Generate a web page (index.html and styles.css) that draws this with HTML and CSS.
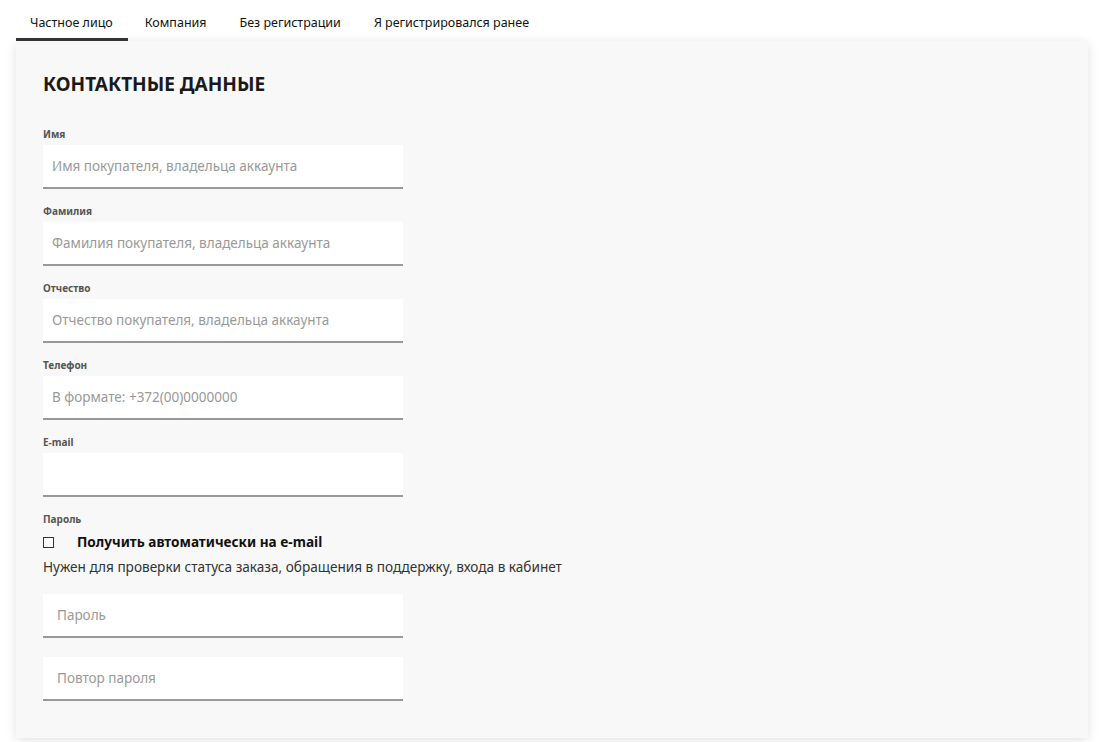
FILE: index.html
```html
<!DOCTYPE html>
<html lang="ru">
<head>
    <meta charset="UTF-8">
    <title>Оформление заказа - Контактные данные</title>
    <link rel="stylesheet" href="styles.css">
</head>
<body>
    <nav class="tabs">
        <a class="tab active" href="#">Частное лицо</a>
        <a class="tab" href="#">Компания</a>
        <a class="tab" href="#">Без регистрации</a>
        <a class="tab" href="#">Я регистрировался ранее</a>
    </nav>

    <div class="card">
        <h2>КОНТАКТНЫЕ ДАННЫЕ</h2>

        <div class="field">
            <label>Имя</label>
            <input type="text" placeholder="Имя покупателя, владельца аккаунта">
        </div>
        <div class="field">
            <label>Фамилия</label>
            <input type="text" placeholder="Фамилия покупателя, владельца аккаунта">
        </div>
        <div class="field">
            <label>Отчество</label>
            <input type="text" placeholder="Отчество покупателя, владельца аккаунта">
        </div>
        <div class="field">
            <label>Телефон</label>
            <input type="text" placeholder="В формате: +372(00)0000000">
        </div>
        <div class="field">
            <label>E-mail</label>
            <input type="text">
        </div>

        <div class="field">
            <label>Пароль</label>
            <div class="check">
                <span class="box"></span>
                <strong>Получить автоматически на e-mail</strong>
            </div>
            <p class="hint">Нужен для проверки статуса заказа, обращения в поддержку, входа в кабинет</p>
            <input type="password" class="pass" placeholder="Пароль">
            <input type="password" class="pass" placeholder="Повтор пароля">
        </div>
    </div>
</body>
</html>
```

FILE: styles.css
```css
body {
    font-family: "Noto Sans", "Open Sans", sans-serif;
    margin: 0;
    padding: 0 16px;
    background-color: #fff;
    color: #222;
}
.tabs {
    display: flex;
    height: 41px;
    align-items: flex-start;
}
.tab {
    display: block;
    padding: 14px 16px 0 14px;
    height: 24px;
    font-size: 12.5px;
    color: #111;
    text-decoration: none;
    border-bottom: 3px solid transparent;
    margin-right: 3px;
}
.tab:first-child {
    padding-right: 15px;
}
.tab.active {
    border-bottom-color: #333;
}
.card {
    background-color: #f8f8f8;
    box-shadow: 0 2px 10px rgba(0, 0, 0, 0.12);
    padding: 27px 27px 37px;
    margin-bottom: 5px;
}
h2 {
    font-size: 19px;
    font-weight: bold;
    color: #1a1a1a;
    margin: 0 0 27px;
    line-height: 32px;
}
.field {
    margin-bottom: 15px;
}
.field:last-child {
    margin-bottom: 0;
}
label {
    display: block;
    font-size: 10px;
    font-weight: bold;
    color: #555;
    line-height: 14px;
    margin-bottom: 4px;
}
input {
    display: block;
    box-sizing: border-box;
    width: 360px;
    height: 44px;
    border: none;
    border-bottom: 2px solid #999;
    background-color: #fff;
    padding: 0 9px;
    font-family: inherit;
    font-size: 13.5px;
    color: #333;
    outline: none;
}
input::placeholder {
    color: #999;
}
.pass {
    padding-left: 14px;
    margin-bottom: 19px;
}
.pass:last-child {
    margin-bottom: 0;
}
.check {
    display: flex;
    align-items: center;
    font-size: 13.6px;
    line-height: 20px;
    margin-top: 6px;
}
.box {
    width: 9px;
    height: 9px;
    border: 1px solid #333;
    background-color: #fff;
    margin-right: 23px;
}
.check strong {
    color: #111;
}
.hint {
    font-size: 13.6px;
    color: #333;
    margin: 5px 0 17px;
    line-height: 20px;
}
```
